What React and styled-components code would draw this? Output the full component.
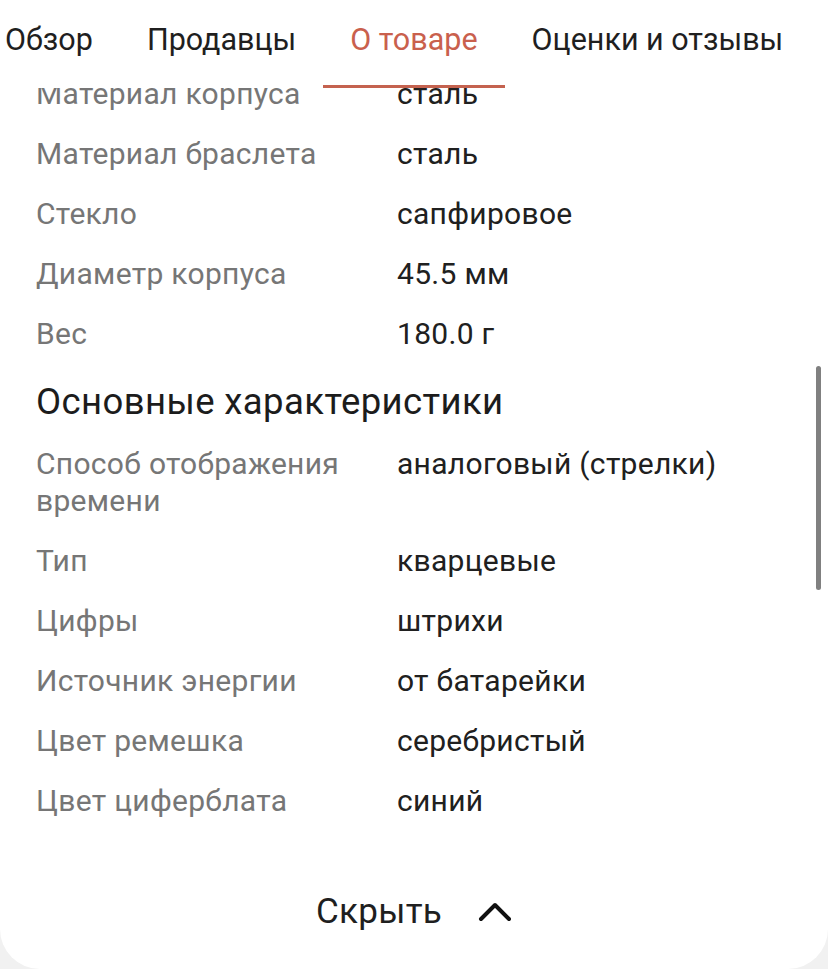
import React from "react";
import styled, { createGlobalStyle } from "styled-components";

const Global = createGlobalStyle`
  html, body { margin: 0; padding: 0; background: #f1f1f1; }
  body { font-family: Roboto, "Noto Sans", sans-serif; -webkit-font-smoothing: antialiased; }
`;

const Screen = styled.div`
  position: relative;
  width: 828px;
  height: 969px;
  background: #ffffff;
  border-radius: 0 0 40px 40px;
  overflow: hidden;
  display: flex;
  flex-direction: column;
`;

const TabBar = styled.div`
  position: relative;
  z-index: 2;
  height: 88px;
  flex: 0 0 88px;
  background: #ffffff;
  display: flex;
  align-items: stretch;
  margin-left: -22px;
  white-space: nowrap;
`;

const Tab = styled.div`
  position: relative;
  padding: 0 27px;
  display: flex;
  align-items: center;
  padding-bottom: 9px;
  font-size: 30.5px;
  color: ${(p) => (p.$active ? "#c9604d" : "#1f1f1f")};
  &::after {
    content: "";
    position: absolute;
    left: 0;
    right: 0;
    bottom: 0;
    height: 3px;
    background: ${(p) => (p.$active ? "#c4624f" : "transparent")};
  }
`;

const Scroller = styled.div`
  flex: 1;
  overflow: hidden;
  position: relative;
`;

const Content = styled.div`
  margin-top: -24px;
  padding: 0 36px;
`;

const Row = styled.div`
  display: grid;
  grid-template-columns: 340px 1fr;
  column-gap: 21px;
  padding: 11px 0 12px;
  font-size: 30px;
  letter-spacing: 0.3px;
  line-height: 37px;
`;

const Label = styled.div`
  color: #767676;
`;

const Value = styled.div`
  color: #202020;
`;

const Heading = styled.div`
  margin: 18px 0 12px;
  font-size: 36.5px;
  letter-spacing: 0.4px;
  line-height: 40px;
  color: #1c1c1c;
`;

const Footer = styled.div`
  display: flex;
  justify-content: center;
  align-items: center;
  gap: 36px;
  margin-top: 61px;
  font-size: 35px;
  letter-spacing: 0.3px;
  line-height: 40px;
  color: #1f1f1f;
`;

const Scrollbar = styled.div`
  position: absolute;
  right: 7px;
  top: 366px;
  width: 5px;
  height: 224px;
  border-radius: 3px;
  background: #808080;
  z-index: 3;
`;

const tabs = ["Обзор", "Продавцы", "О товаре", "Оценки и отзывы"];

const specs1 = [
  ["Материал корпуса", "сталь"],
  ["Материал браслета", "сталь"],
  ["Стекло", "сапфировое"],
  ["Диаметр корпуса", "45.5 мм"],
  ["Вес", "180.0 г"],
];

const specs2 = [
  ["Способ отображения времени", "аналоговый (стрелки)"],
  ["Тип", "кварцевые"],
  ["Цифры", "штрихи"],
  ["Источник энергии", "от батарейки"],
  ["Цвет ремешка", "серебристый"],
  ["Цвет циферблата", "синий"],
];

function Spec({ label, value }) {
  return (
    <Row>
      <Label>{label}</Label>
      <Value>{value}</Value>
    </Row>
  );
}

export default function App() {
  return (
    <>
      <Global />
      <Screen>
        <TabBar>
          {tabs.map((t) => (
            <Tab key={t} $active={t === "О товаре"}>
              {t}
            </Tab>
          ))}
        </TabBar>
        <Scroller>
          <Content>
            {specs1.map(([l, v]) => (
              <Spec key={l} label={l} value={v} />
            ))}
            <Heading>Основные характеристики</Heading>
            {specs2.map(([l, v]) => (
              <Spec key={l} label={l} value={v} />
            ))}
            <Footer>
              <span>Скрыть</span>
              <svg width="34" height="20" viewBox="0 0 34 20" fill="none">
                <polyline
                  points="3,17 17,3 31,17"
                  stroke="#111"
                  strokeWidth="4"
                  strokeLinecap="round"
                  strokeLinejoin="round"
                />
              </svg>
            </Footer>
          </Content>
        </Scroller>
        <Scrollbar />
      </Screen>
    </>
  );
}
